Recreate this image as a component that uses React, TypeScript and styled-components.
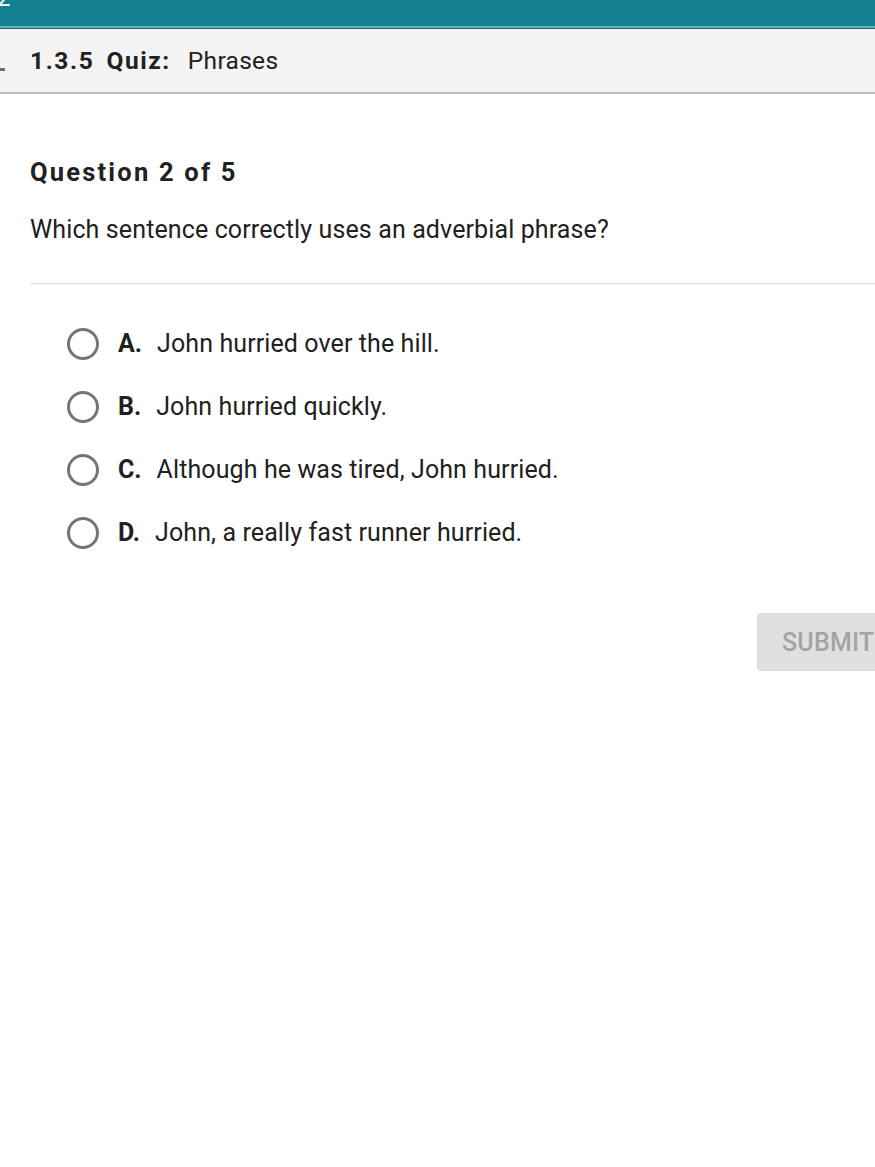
import * as React from 'react';
import styled, { createGlobalStyle } from 'styled-components';

const GlobalStyle = createGlobalStyle`
  html, body {
    margin: 0;
    padding: 0;
    background: #ffffff;
    font-family: Roboto, "Liberation Sans", Arial, sans-serif;
    color: #212121;
  }
  * { box-sizing: border-box; }
`;

const Page = styled.div`
  width: 875px;
  min-height: 1167px;
  overflow: hidden;
  background: #ffffff;
`;

const TopBar = styled.div`
  height: 29px;
  background: #13808f;
  border-bottom: 1px solid #0f6d79;
  box-shadow: inset 0 -2px 0 #5fb3bd;
  overflow: hidden;
`;

const TopBarGlyph = styled.span`
  display: block;
  margin: -14px 0 0 -3px;
  font-size: 24px;
  line-height: 24px;
  color: #ffffff;
`;

const Header = styled.header`
  height: 65px;
  background: #f4f4f4;
  border-bottom: 2px solid #bdbdbd;
  display: flex;
  align-items: center;
  padding-left: 30px;
  position: relative;
`;

const CutMark = styled.span`
  position: absolute;
  left: 0;
  top: 39px;
  width: 5px;
  height: 3px;
  background: #6b6b6b;
`;

const Title = styled.h1`
  margin: 0;
  font-size: 24.5px;
  font-weight: 400;
  color: #212121;
  letter-spacing: 0.3px;
`;

const Strong = styled.span<{ $gap: number }>`
  font-weight: 700;
  letter-spacing: 1.6px;
  margin-right: ${(p) => p.$gap}px;
`;

const Content = styled.main`
  padding: 62px 0 0 30px;
`;

const QuestionLabel = styled.h2`
  margin: 0;
  font-size: 25.5px;
  font-weight: 700;
  letter-spacing: 2.2px;
  line-height: 32px;
`;

const Prompt = styled.p`
  margin: 26px 0 0;
  font-size: 25px;
  line-height: 32px;
  font-weight: 400;
  letter-spacing: 0.12px;
`;

const Divider = styled.hr`
  margin: 37px 0 0;
  border: 0;
  border-top: 1px solid #dcdcdc;
`;

const Options = styled.ul`
  list-style: none;
  margin: 0;
  padding: 43px 0 0 37px;
  display: flex;
  flex-direction: column;
  gap: 31px;
`;

const Option = styled.li`
  display: flex;
  align-items: center;
  height: 32px;
  cursor: pointer;
`;

const Radio = styled.span`
  width: 32px;
  height: 32px;
  border-radius: 50%;
  border: 3px solid #757575;
  flex-shrink: 0;
  margin-right: 19px;
  position: relative;
  top: 1px;
`;

const Letter = styled.span`
  font-weight: 700;
  font-size: 25px;
  margin-right: 15px;
`;

const OptionText = styled.span`
  font-size: 25px;
  letter-spacing: 0.1px;
`;

const Actions = styled.div`
  display: flex;
  justify-content: flex-end;
  margin-top: 65px;
`;

const SubmitButton = styled.button`
  width: 152px;
  height: 58px;
  margin-right: -34px;
  border: 1px solid #dadada;
  border-radius: 4px;
  background: #e0e0e0;
  color: #a3a3a3;
  font-family: Roboto, "Liberation Sans", Arial, sans-serif;
  font-size: 25px;
  font-weight: 500;
  text-align: left;
  white-space: nowrap;
  padding: 0 0 0 24px;
  letter-spacing: 0.2px;
`;

const options = [
  { letter: 'A.', text: 'John hurried over the hill.' },
  { letter: 'B.', text: 'John hurried quickly.' },
  { letter: 'C.', text: 'Although he was tired, John hurried.' },
  { letter: 'D.', text: 'John, a really fast runner hurried.' },
];

export default function App() {
  return (
    <Page>
      <GlobalStyle />
      <TopBar>
        <TopBarGlyph>2</TopBarGlyph>
      </TopBar>
      <Header>
        <CutMark />
        <Title>
          <Strong $gap={12}>1.3.5</Strong>
          <Strong $gap={17}>Quiz:</Strong>
          Phrases
        </Title>
      </Header>
      <Content>
        <QuestionLabel>Question 2 of 5</QuestionLabel>
        <Prompt>Which sentence correctly uses an adverbial phrase?</Prompt>
        <Divider />
        <Options>
          {options.map((o) => (
            <Option key={o.letter}>
              <Radio />
              <Letter>{o.letter}</Letter>
              <OptionText>{o.text}</OptionText>
            </Option>
          ))}
        </Options>
        <Actions>
          <SubmitButton disabled>SUBMIT</SubmitButton>
        </Actions>
      </Content>
    </Page>
  );
}
